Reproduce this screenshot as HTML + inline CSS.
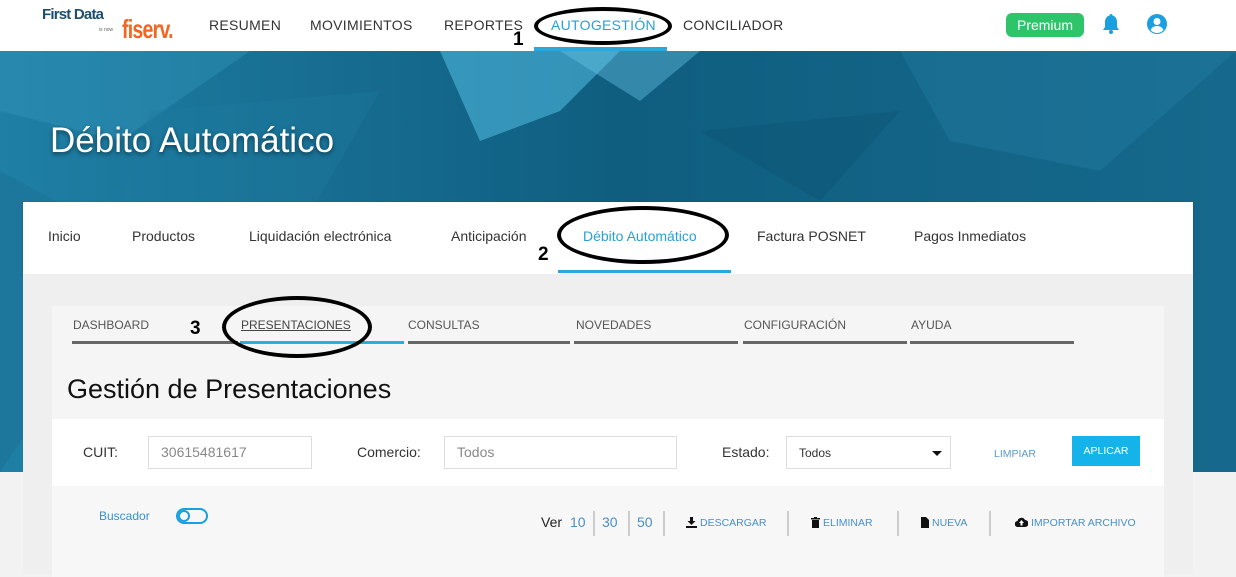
<!DOCTYPE html>
<html><head><meta charset="utf-8"><style>
*{box-sizing:border-box;margin:0;padding:0}
body{width:1236px;height:568px;overflow:hidden;background:#f2f2f2;font-family:"Liberation Sans",sans-serif;position:relative}
.abs{position:absolute}
.hdr{left:0;top:0;width:1236px;height:51px;background:#fff;z-index:3}
.nav{font-size:14px;color:#333;top:17px;letter-spacing:.3px}
.hero{left:0;top:51px;width:1236px;height:421px;overflow:hidden}
.card{left:23px;top:202px;width:1170px;height:72px;background:#fff;box-shadow:0 1px 3px rgba(0,0,0,.15)}
.tab{top:228px;font-size:14px;color:#333}
.body{left:23px;top:274px;width:1170px;height:300px;background:#efefef}
.inner{left:52px;top:306px;width:1112px;height:270px;background:#f5f5f5}
.st{top:318px;font-size:12px;color:#555}
.bar{top:341px;height:3px;background:#666}
.filt{left:52px;top:419px;width:1112px;height:67px;background:#fff}
.lbl{font-size:14px;color:#333;top:444px}
.inp{top:436px;height:33px;border:1px solid #ddd;font-size:14px;color:#888;padding:7px 12px;background:#fff}
.bot{left:52px;top:487px;width:1112px;height:90px;background:#f7f7f7}
.act{top:517px;font-size:10.5px;color:#4a8fc6}
.sep{top:511px;width:2px;height:25px;background:#ccc}
.ell{border:4px solid #000;border-radius:50%}
.num{font-weight:bold;font-size:19px;color:#000}
</style></head><body>
<div class="abs hdr">
 <div class="abs" style="left:42px;top:6px;font-size:15px;font-weight:bold;color:#1d4e6e;letter-spacing:-.8px">First Data</div>
 <div class="abs" style="left:99px;top:27px;font-size:5px;color:#666">is now</div>
 <div class="abs" style="left:122px;top:14px;font-size:26px;font-weight:bold;color:#f26522;letter-spacing:-1px;transform:scaleX(.75);transform-origin:left">fiserv.</div>
 <div class="abs nav" style="left:209px">RESUMEN</div>
 <div class="abs nav" style="left:310px">MOVIMIENTOS</div>
 <div class="abs nav" style="left:444px">REPORTES</div>
 <div class="abs nav" style="left:551px;color:#2a9fd6">AUTOGESTIÓN</div>
 <div class="abs" style="left:534px;top:47px;width:133px;height:4px;background:#2aa7dc"></div>
 <div class="abs nav" style="left:683px">CONCILIADOR</div>
 <div class="abs ell" style="left:534px;top:7px;width:138px;height:38px"></div>
 <div class="abs num" style="left:513px;top:29px">1</div>
 <div class="abs" style="left:1006px;top:13px;width:78px;height:24px;background:#2ec46a;border-radius:6px;color:#fff;font-size:14px;text-align:center;line-height:24px">Premium</div>
 <svg class="abs" style="left:1101px;top:13px" width="20" height="22" viewBox="0 0 20 22"><path d="M10 1c1 0 1.5.7 1.5 1.5C14.5 3.3 16 6 16 9v5l2 3H2l2-3V9c0-3 1.5-5.7 4.5-6.5C8.5 1.7 9 1 10 1z" fill="#1a9fe0"/><circle cx="10" cy="19" r="2" fill="#1a9fe0"/></svg>
 <svg class="abs" style="left:1146px;top:13px" width="22" height="22" viewBox="0 0 22 22"><circle cx="11" cy="11" r="10" fill="#1a9fe0"/><circle cx="11" cy="8.5" r="3.5" fill="#fff"/><path d="M4.5 17c1.5-3 4-4 6.5-4s5 1 6.5 4c-1.5 1.8-4 3-6.5 3s-5-1.2-6.5-3z" fill="#fff"/></svg>
</div>
<div class="abs hero">
<svg width="1236" height="421" viewBox="0 0 1236 421">
<defs><linearGradient id="g" x1="0" y1="0" x2="1" y2="0"><stop offset="0" stop-color="#1f7fa5"/><stop offset=".5" stop-color="#0f5e80"/><stop offset="1" stop-color="#16698c"/></linearGradient></defs>
<rect width="1236" height="421" fill="url(#g)"/>
<polygon points="0,0 250,0 120,90 0,60" fill="#3a9bc0" opacity=".35"/>
<polygon points="440,0 620,0 560,60 480,90" fill="#4fb6dc" opacity=".6"/>
<polygon points="560,0 700,0 640,50" fill="#6cc7e8" opacity=".4"/>
<polygon points="150,60 380,40 300,180 120,150" fill="#1f7aa0" opacity=".35"/>
<polygon points="0,120 150,200 0,421" fill="#1b6f93" opacity=".5"/>
<polygon points="900,0 1236,0 1100,120 950,90" fill="#2b8cb3" opacity=".25"/>
<polygon points="700,80 900,60 820,150" fill="#0c4f70" opacity=".35"/>
</svg>
<div class="abs" style="left:50px;top:70px;font-size:35px;color:#fff;text-shadow:0 2px 4px rgba(0,0,0,.5)">Débito Automático</div>
</div>
<div class="abs card"></div>
<div class="abs tab" style="left:48px">Inicio</div>
<div class="abs tab" style="left:132px">Productos</div>
<div class="abs tab" style="left:249px">Liquidación electrónica</div>
<div class="abs tab" style="left:451px">Anticipación</div>
<div class="abs tab" style="left:583px;color:#2a9fd6">Débito Automático</div>
<div class="abs tab" style="left:757px">Factura POSNET</div>
<div class="abs tab" style="left:914px">Pagos Inmediatos</div>
<div class="abs" style="left:558px;top:270px;width:173px;height:3px;background:#2aa7dc"></div>
<div class="abs ell" style="left:557px;top:206px;width:172px;height:58px"></div>
<div class="abs num" style="left:538px;top:244px">2</div>
<div class="abs body"></div>
<div class="abs inner"></div>
<div class="abs st" style="left:73px">DASHBOARD</div>
<div class="abs st" style="left:241px;text-decoration:underline;color:#444">PRESENTACIONES</div>
<div class="abs st" style="left:408px">CONSULTAS</div>
<div class="abs st" style="left:576px">NOVEDADES</div>
<div class="abs st" style="left:744px">CONFIGURACIÓN</div>
<div class="abs st" style="left:911px">AYUDA</div>
<div class="abs bar" style="left:72px;width:166px"></div>
<div class="abs bar" style="left:240px;width:164px;background:#2aaee0"></div>
<div class="abs bar" style="left:408px;width:162px"></div>
<div class="abs bar" style="left:574px;width:164px"></div>
<div class="abs bar" style="left:743px;width:164px"></div>
<div class="abs bar" style="left:910px;width:164px"></div>
<div class="abs ell" style="left:222px;top:296px;width:150px;height:62px"></div>
<div class="abs num" style="left:190px;top:318px">3</div>
<div class="abs" style="left:67px;top:374px;font-size:27px;color:#111">Gestión de Presentaciones</div>
<div class="abs filt"></div>
<div class="abs lbl" style="left:83px">CUIT:</div>
<div class="abs inp" style="left:148px;width:164px">30615481617</div>
<div class="abs lbl" style="left:357px">Comercio:</div>
<div class="abs inp" style="left:444px;width:233px">Todos</div>
<div class="abs lbl" style="left:722px">Estado:</div>
<div class="abs inp" style="left:786px;width:165px;color:#333;font-size:12px;padding-top:9px">Todos</div>
<div class="abs" style="left:932px;top:451px;border-left:5px solid transparent;border-right:5px solid transparent;border-top:5px solid #111"></div>
<div class="abs" style="left:994px;top:448px;font-size:10.5px;color:#5a9bd0">LIMPIAR</div>
<div class="abs" style="left:1072px;top:436px;width:68px;height:30px;background:#14b4ea;color:#fff;font-size:10.5px;text-align:center;line-height:30px">APLICAR</div>
<div class="abs bot"></div>
<div class="abs" style="left:99px;top:509px;font-size:12px;color:#3a8fd0">Buscador</div>
<div class="abs" style="left:176px;top:508px;width:32px;height:16px;border:2px solid #1a9fe0;border-radius:8px"><div style="width:12px;height:12px;border-radius:50%;border:2px solid #1a9fe0;margin:0"></div></div>
<div class="abs" style="left:541px;top:514px;font-size:14px;color:#222">Ver</div>
<div class="abs" style="left:570px;top:514px;font-size:14px;color:#4a8fc6">10</div>
<div class="abs sep" style="left:593px"></div>
<div class="abs" style="left:602px;top:514px;font-size:14px;color:#4a8fc6">30</div>
<div class="abs sep" style="left:628px"></div>
<div class="abs" style="left:637px;top:514px;font-size:14px;color:#4a8fc6">50</div>
<div class="abs sep" style="left:663px"></div>
<svg class="abs" style="left:686px;top:517px" width="11" height="11" viewBox="0 0 11 11"><path d="M4 0h3v4h2.5L5.5 8 1.5 4H4z M0 9h11v2H0z" fill="#111"/></svg>
<div class="abs act" style="left:700px">DESCARGAR</div>
<div class="abs sep" style="left:787px"></div>
<svg class="abs" style="left:811px;top:517px" width="9" height="11" viewBox="0 0 9 11"><path d="M0 1h9v1.5H0z M3 0h3v1H3z M1 3h7v8H1z" fill="#111"/></svg>
<div class="abs act" style="left:823px">ELIMINAR</div>
<div class="abs sep" style="left:897px"></div>
<svg class="abs" style="left:921px;top:517px" width="8" height="11" viewBox="0 0 8 11"><path d="M0 0h5l3 3v8H0z" fill="#111"/></svg>
<div class="abs act" style="left:932px">NUEVA</div>
<div class="abs sep" style="left:989px"></div>
<svg class="abs" style="left:1015px;top:517px" width="13" height="10" viewBox="0 0 13 10"><path d="M3 10a3 3 0 0 1-.5-6A4 4 0 0 1 10 3a3.5 3.5 0 0 1 0 7z" fill="#111"/><path d="M6.5 3l2.5 3H7.5v2.5h-2V6H4z" fill="#fff"/></svg>
<div class="abs act" style="left:1031px">IMPORTAR ARCHIVO</div>
</body></html>
